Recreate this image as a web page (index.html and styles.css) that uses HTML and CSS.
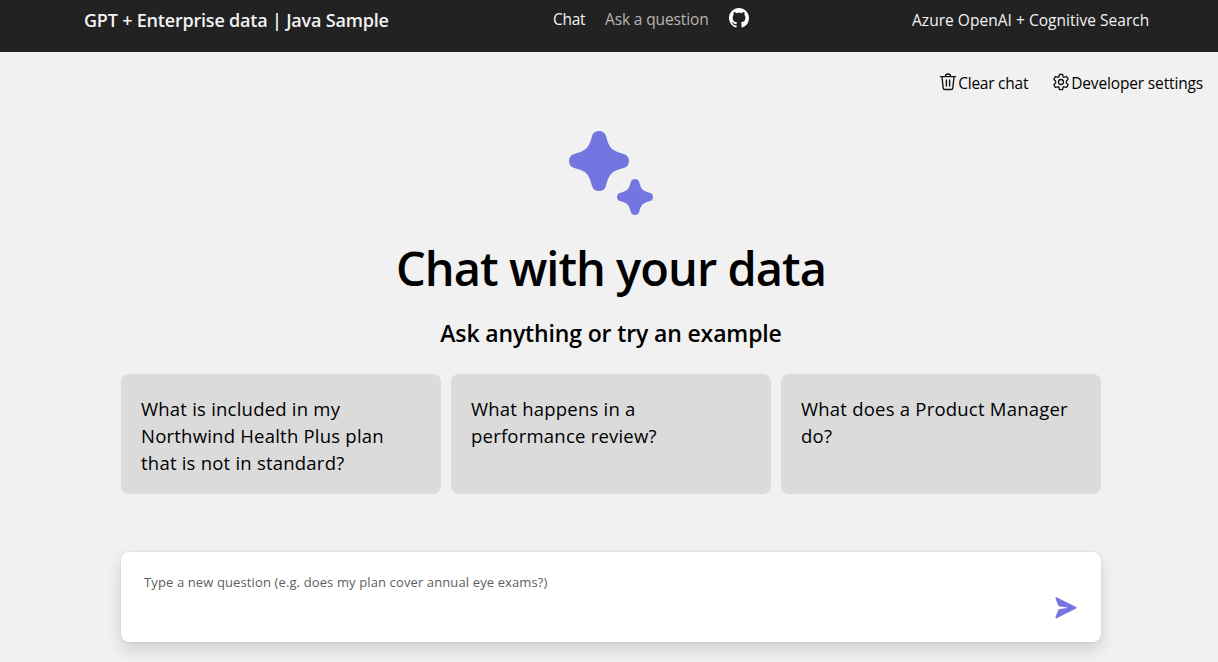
FILE: index.html
```html
<!DOCTYPE html>
<html lang="en">
<head>
<meta charset="utf-8">
<title>GPT + Enterprise data | Java Sample</title>
<link rel="stylesheet" href="styles.css">
</head>
<body>
<header class="header">
  <h3 class="header-title">GPT + Enterprise data | Java Sample</h3>
  <nav class="nav">
    <a class="nav-chat">Chat</a>
    <a class="nav-ask">Ask a question</a>
    <svg class="github" viewBox="0 0 16 16" fill="#fff"><path d="M8 0C3.58 0 0 3.58 0 8c0 3.54 2.29 6.53 5.47 7.59.4.07.55-.17.55-.38 0-.19-.01-.82-.01-1.49-2.01.37-2.53-.49-2.69-.94-.09-.23-.48-.94-.82-1.13-.28-.15-.68-.52-.01-.53.63-.01 1.08.58 1.23.82.72 1.21 1.87.87 2.33.66.07-.52.28-.87.51-1.07-1.78-.2-3.64-.89-3.64-3.95 0-.87.31-1.59.82-2.15-.08-.2-.36-1.02.08-2.12 0 0 .67-.21 2.2.82.64-.18 1.32-.27 2-.27s1.36.09 2 .27c1.53-1.04 2.2-.82 2.2-.82.44 1.1.16 1.92.08 2.12.51.56.82 1.27.82 2.15 0 3.07-1.87 3.75-3.65 3.95.29.25.54.73.54 1.48 0 1.07-.01 1.93-.01 2.2 0 .21.15.46.55.38A8.01 8.01 0 0 0 16 8c0-4.42-3.58-8-8-8z"/></svg>
  </nav>
  <h4 class="header-right">Azure OpenAI + Cognitive Search</h4>
</header>
<main class="main">
  <div class="commands">
    <div class="command command-clear">
      <svg class="icon" viewBox="0 0 18 18" fill="none" stroke="#111" stroke-width="1.35" stroke-linecap="round" stroke-linejoin="round"><path d="M1.4 3.6h15.2M6.4 3.4a2.6 2.4 0 0 1 5.2 0M3 3.8l1.2 11.3a1.6 1.6 0 0 0 1.6 1.4h6.4a1.6 1.6 0 0 0 1.6-1.4L15 3.8M7.4 7v6M10.6 7v6"/></svg>
      <span>Clear chat</span>
    </div>
    <div class="command">
      <svg class="icon" viewBox="0 0 18 18" fill="none" stroke="#111" stroke-width="1.3" stroke-linejoin="round"><circle cx="9" cy="9" r="2.5"/><path d="M7.4 1.5Q9 1.1 10.6 1.5L11 3.5Q11.3 4.4 12.3 4.2L14.4 3.5Q15.7 4.8 16.1 6.4L14.6 7.8Q13.6 9 14.6 10.2L16.1 11.6Q15.7 13.2 14.4 14.5L12.3 13.8Q11.3 13.6 11 14.5L10.6 16.5Q9 16.9 7.4 16.5L7 14.5Q6.7 13.6 5.7 13.8L3.6 14.5Q2.3 13.2 1.9 11.6L3.4 10.2Q4.4 9 3.4 7.8L1.9 6.4Q2.3 4.8 3.6 3.5L5.7 4.2Q6.7 4.4 7 3.5Z"/></svg>
      <span>Developer settings</span>
    </div>
  </div>
  <section class="hero">
    <svg class="sparkle" viewBox="0 0 84 84" fill="#7376e1">
      <path id="star" d="M23.2 4.6C25-1.5 35-1.5 36.8 4.6C40.4 17.6 42.4 19.6 55.4 23.2C61.5 25 61.5 35 55.4 36.8C42.4 40.4 40.4 42.4 36.8 55.4C35 61.5 25 61.5 23.2 55.4C19.6 42.4 17.6 40.4 4.6 36.8C-1.5 35-1.5 25 4.6 23.2C17.6 19.6 19.6 17.6 23.2 4.6Z"/>
      <use href="#star" transform="translate(48 48) scale(.6)"/>
    </svg>
    <h1 class="title">Chat with your data</h1>
    <h2 class="subtitle">Ask anything or try an example</h2>
    <div class="examples">
      <div class="example">What is included in my Northwind Health Plus plan that is not in standard?</div>
      <div class="example">What happens in a performance review?</div>
      <div class="example">What does a Product Manager do?</div>
    </div>
  </section>
  <div class="question">
    <div class="placeholder">Type a new question (e.g. does my plan cover annual eye exams?)</div>
    <svg class="send" viewBox="0 0 24 24" fill="#7376e1"><path d="m12.81 12.2-7.53 1.25a.5.5 0 0 0-.4.32l-2.6 6.96c-.24.64.43 1.26 1.04.95l18-9a.75.75 0 0 0 0-1.34l-18-9c-.61-.3-1.28.3-1.04.95l2.6 6.96a.5.5 0 0 0 .4.32l7.53 1.25a.2.2 0 0 1 0 .38Z" transform="translate(0 .69)"/></svg>
  </div>
</main>
</body>
</html>
```
FILE: styles.css
```css
* { box-sizing: border-box; }
body {
  margin: 0;
  height: 662px;
  overflow: hidden;
  background: #f1f1f1;
  color: #000;
  font-family: "Open Sans", "Noto Sans", sans-serif;
  font-size: 16px;
}
h1, h2, h3, h4 { margin: 0; }
.header {
  height: 52px;
  background: #222;
  color: #f2f2f2;
  display: grid;
  grid-template-columns: 553px 359px 1fr;
  white-space: nowrap;
}
.header-title {
  padding: 8px 0 0 84px;
  font-size: 18px;
  line-height: 24px;
  font-weight: 600;
  letter-spacing: -0.2px;
}
.nav { display: flex; height: 40px; line-height: 24px; padding-top: 7px; font-size: 15.5px; letter-spacing: -0.13px; }
.nav-chat { width: 52px; letter-spacing: -0.3px; }
.nav-ask { width: 124px; color: #b5b5b5; }
.github { width: 20px; height: 20px; margin-top: 1px; }
.header-right { padding-top: 8px; font-size: 15.5px; line-height: 24px; font-weight: 400; letter-spacing: 0.03px; }
.commands {
  display: flex;
  justify-content: flex-end;
  gap: 24px;
  padding: 19px 15px 0 0;
  height: 79px;
}
.command {
  display: flex;
  gap: 1px;
  height: 24px;
  line-height: 24px;
  font-size: 15.5px;
  letter-spacing: -0.15px;
  white-space: nowrap;
}
.command-clear { letter-spacing: -0.25px; }
.icon { width: 18px; height: 18px; margin-top: 2px; }
.hero { display: flex; flex-direction: column; align-items: center; padding-left: 4px; }
.sparkle { width: 84px; height: 84px; }
.title { margin-top: 21px; font-size: 47px; line-height: 64px; font-weight: 540; letter-spacing: -0.97px; }
.subtitle { margin-top: 17px; font-size: 23px; line-height: 32px; font-weight: 570; letter-spacing: -0.14px; }
.examples { display: grid; grid-template-columns: repeat(3, 320px); gap: 10px; margin-top: 25px; }
.example {
  height: 120px;
  padding: 21px 28px 0 20px;
  border-radius: 8px;
  background: #dbdbdb;
  font-size: 18.5px;
  line-height: 27px;
  letter-spacing: 0.22px;
}
.question {
  display: flex;
  justify-content: space-between;
  width: 980px;
  height: 90px;
  margin: 58px 0 0 121px;
  padding: 20px 22px 0 23px;
  border-radius: 8px;
  background: #fff;
  box-shadow: 0 8px 16px rgba(0, 0, 0, .14), 0 0 2px rgba(0, 0, 0, .12);
}
.placeholder { font-size: 13px; line-height: 20px; color: #605e5c; letter-spacing: 0.12px; }
.send { width: 26px; height: 26px; margin-top: 22px; }
```
